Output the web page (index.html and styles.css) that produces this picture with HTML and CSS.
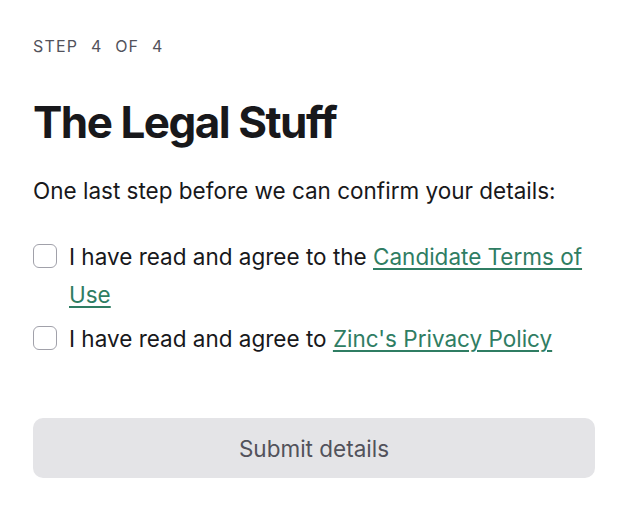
FILE: index.html
```html
<!DOCTYPE html>
<html lang="en">
<head>
  <meta charset="UTF-8" />
  <meta name="viewport" content="width=device-width, initial-scale=1.0"/>
  <title>The Legal Stuff</title>
  <link rel="stylesheet" href="styles.css">
</head>
<body>

  <form class="step">
    <div class="step-label">Step 4 of 4</div>
    <h1 class="title">The Legal Stuff</h1>
    <p class="intro">One last step before we can confirm your details:</p>

    <label class="agree">
      <input type="checkbox" />
      <span>I have read and agree to the <a href="#">Candidate Terms of Use</a></span>
    </label>
    <label class="agree">
      <input type="checkbox" />
      <span>I have read and agree to <a href="#">Zinc's Privacy Policy</a></span>
    </label>

    <button type="button" class="submit" disabled>Submit details</button>
  </form>

</body>
</html>
```

FILE: styles.css
```css
* {
  box-sizing: border-box;
}

body {
  margin: 0;
  font-family: Inter, "Noto Sans", sans-serif;
  background: #fff;
  color: #18181b;
}

.step {
  width: 562px;
  margin-left: 33px;
  padding-top: 36px;
  display: flex;
  flex-direction: column;
}

.step-label {
  font-size: 16px;
  line-height: 20px;
  text-transform: uppercase;
  letter-spacing: 1.2px;
  word-spacing: 7px;
  color: #52525b;
}

.title {
  margin: 39px 0 0;
  font-size: 44px;
  font-weight: 700;
  letter-spacing: -1.5px;
  line-height: 54px;
}

.intro {
  margin: 27px 0 32px;
  font-size: 22.5px;
  line-height: 30px;
}

.agree {
  display: flex;
  gap: 12px;
  font-size: 22.5px;
  line-height: 38px;
  margin-bottom: 6px;
}

.agree input {
  appearance: none;
  flex: none;
  width: 24px;
  height: 24px;
  margin: 6px 0 0;
  border: 1px solid #a1a1aa;
  border-radius: 6px;
  background: #fff;
}

.agree a {
  color: #2f7d63;
  text-decoration: underline;
  text-decoration-thickness: 1.5px;
  text-underline-offset: 3px;
}

.submit {
  margin-top: 54px;
  height: 60px;
  border: none;
  border-radius: 10px;
  background: #e4e4e7;
  color: #52525b;
  font-family: inherit;
  font-size: 22.5px;
}
```
